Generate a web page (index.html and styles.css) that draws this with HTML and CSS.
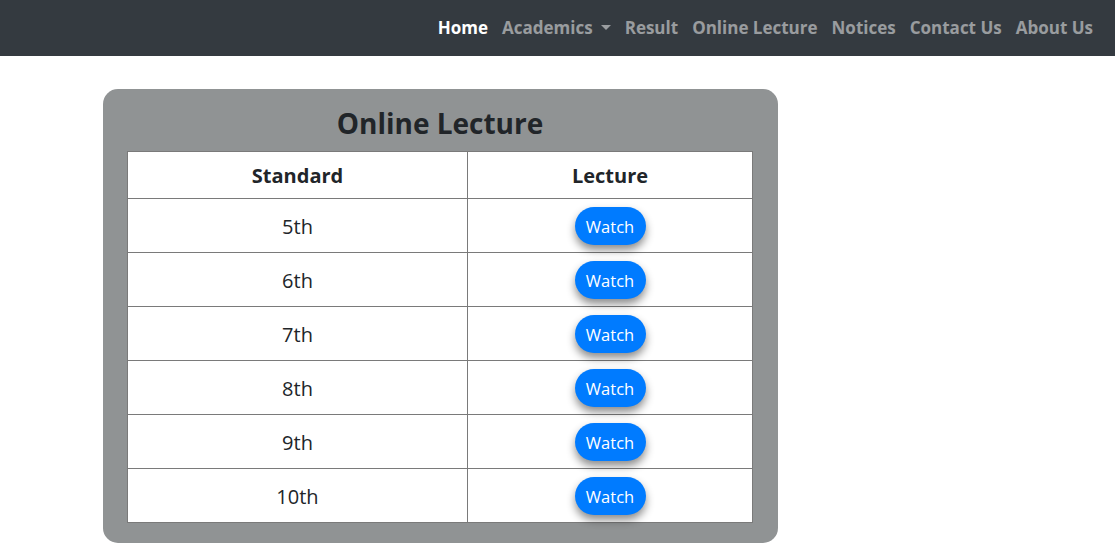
FILE: index.html
```html
<!DOCTYPE html>
<html>
<head>
<meta charset="utf-8">
<link rel="stylesheet" href="styles.css">
</head>
<body>
<nav class="navbar">
  <ul class="nav">
    <li class="nav-item active">Home</li>
    <li class="nav-item">Academics <span class="caret"></span></li>
    <li class="nav-item">Result</li>
    <li class="nav-item">Online Lecture</li>
    <li class="nav-item">Notices</li>
    <li class="nav-item">Contact Us</li>
    <li class="nav-item">About Us</li>
  </ul>
</nav>
<main class="content">
  <section class="card">
    <h2 class="card-title">Online Lecture</h2>
    <table class="lectures">
      <thead>
        <tr><th class="col-std">Standard</th><th class="col-lec">Lecture</th></tr>
      </thead>
      <tbody>
        <tr><td>5th</td><td><button class="btn">Watch</button></td></tr>
        <tr><td>6th</td><td><button class="btn">Watch</button></td></tr>
        <tr><td>7th</td><td><button class="btn">Watch</button></td></tr>
        <tr><td>8th</td><td><button class="btn">Watch</button></td></tr>
        <tr><td>9th</td><td><button class="btn">Watch</button></td></tr>
        <tr><td>10th</td><td><button class="btn">Watch</button></td></tr>
      </tbody>
    </table>
  </section>
</main>
</body>
</html>
```
FILE: styles.css
```css
* { box-sizing: border-box; }
body {
  margin: 0;
  font-family: "Open Sans", "Noto Sans", sans-serif;
  color: #212529;
  background: #fff;
}
.navbar {
  height: 56px;
  background: #343a40;
  display: flex;
  justify-content: flex-end;
  align-items: center;
  padding-right: 22px;
}
.nav {
  list-style: none;
  margin: 0;
  padding: 0 0 2px;
  display: flex;
  gap: 14px;
}
.nav-item {
  font-size: 17px;
  font-weight: 700;
  letter-spacing: 0;
  color: rgba(255,255,255,0.5);
  display: flex;
  align-items: center;
}
.nav-item.active { color: #fff; }
.caret {
  display: inline-block;
  margin-left: 8px;
  border-top: 5px solid currentColor;
  border-left: 5px solid transparent;
  border-right: 5px solid transparent;
}
.content {
  padding: 33px 0 0 103px;
}
.card {
  width: 675px;
  background: #909394;
  border-radius: 15px;
  padding: 6px 25px 20px 24px;
}
.card-title {
  margin: 0;
  text-align: center;
  font-size: 28px;
  font-weight: 700;
  line-height: 56px;
  color: #212529;
}
.lectures {
  width: 626px;
  border-collapse: collapse;
  background: #fff;
  table-layout: fixed;
}
.col-std { width: 340px; }
.lectures th, .lectures td {
  border: 1px solid #7a7a7a;
  text-align: center;
  vertical-align: middle;
}
.lectures th {
  height: 47px;
  font-size: 20px;
  font-weight: 700;
}
.lectures td {
  height: 54px;
  font-size: 20px;
  font-weight: 400;
  padding: 1px 0 0;
}
.btn {
  background: #007bff;
  color: #fff;
  border: none;
  border-radius: 19px;
  height: 38px;
  width: 71px;
  font-family: inherit;
  font-size: 16.5px;
  padding: 0;
  box-shadow: 0 5px 8px rgba(0,0,0,0.45);
  vertical-align: middle;
}
```
